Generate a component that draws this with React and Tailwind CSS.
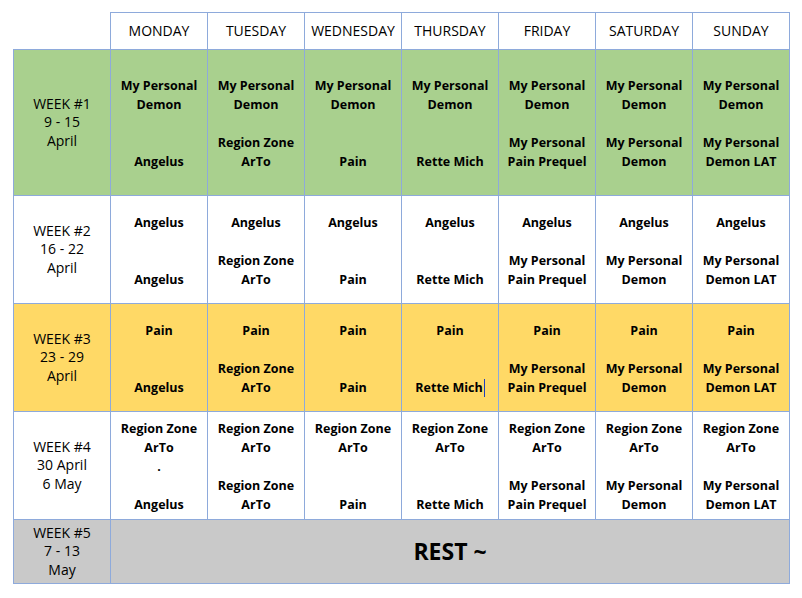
const DAYS = ["MONDAY", "TUESDAY", "WEDNESDAY", "THURSDAY", "FRIDAY", "SATURDAY", "SUNDAY"];

const WEEKS = [
  {
    label: ["WEEK #1", "9 - 15", "April"],
    bg: "bg-[#a9d08e]",
    h: "h-[146px]",
    cells: [
      ["My Personal", "Demon", "", "", "Angelus"],
      ["My Personal", "Demon", "", "Region Zone", "ArTo"],
      ["My Personal", "Demon", "", "", "Pain"],
      ["My Personal", "Demon", "", "", "Rette Mich"],
      ["My Personal", "Demon", "", "My Personal", "Pain Prequel"],
      ["My Personal", "Demon", "", "My Personal", "Demon"],
      ["My Personal", "Demon", "", "My Personal", "Demon LAT"],
    ],
  },
  {
    label: ["WEEK #2", "16 - 22", "April"],
    bg: "bg-white",
    h: "h-[108px]",
    cells: [
      ["Angelus", "", "", "Angelus"],
      ["Angelus", "", "Region Zone", "ArTo"],
      ["Angelus", "", "", "Pain"],
      ["Angelus", "", "", "Rette Mich"],
      ["Angelus", "", "My Personal", "Pain Prequel"],
      ["Angelus", "", "My Personal", "Demon"],
      ["Angelus", "", "My Personal", "Demon LAT"],
    ],
  },
  {
    label: ["WEEK #3", "23 - 29", "April"],
    bg: "bg-[#ffd966]",
    h: "h-[108px]",
    cursor: 3,
    cells: [
      ["Pain", "", "", "Angelus"],
      ["Pain", "", "Region Zone", "ArTo"],
      ["Pain", "", "", "Pain"],
      ["Pain", "", "", "Rette Mich"],
      ["Pain", "", "My Personal", "Pain Prequel"],
      ["Pain", "", "My Personal", "Demon"],
      ["Pain", "", "My Personal", "Demon LAT"],
    ],
  },
  {
    label: ["WEEK #4", "30 April", "6 May"],
    bg: "bg-white",
    h: "h-[108px]",
    cells: [
      ["Region Zone", "ArTo", ".", "", "Angelus"],
      ["Region Zone", "ArTo", "", "Region Zone", "ArTo"],
      ["Region Zone", "ArTo", "", "", "Pain"],
      ["Region Zone", "ArTo", "", "", "Rette Mich"],
      ["Region Zone", "ArTo", "", "My Personal", "Pain Prequel"],
      ["Region Zone", "ArTo", "", "My Personal", "Demon"],
      ["Region Zone", "ArTo", "", "My Personal", "Demon LAT"],
    ],
  },
];

const font = "font-['Comic_Sans_MS','Open_Sans',sans-serif]";

function Lines({ lines, cursor }) {
  return (
    <div className="flex flex-col items-center pt-[2px]">
      {lines.map((l, i) => (
        <div key={i} className="h-[19px] leading-[19px] whitespace-nowrap">
          {l || "\u00a0"}
          {cursor && i === lines.length - 1 && (
            <span className="inline-block w-px h-[18px] bg-[#1f3fbf] align-middle ml-px" />
          )}
        </div>
      ))}
    </div>
  );
}

function WeekLabel({ lines }) {
  return (
    <div className="flex flex-col items-center leading-[18.5px]">
      {lines.map((l) => (
        <div key={l}>{l}</div>
      ))}
    </div>
  );
}

export default function App() {
  return (
    <div className={`w-[802px] h-[598px] bg-white pt-[12px] pl-[13px] ${font} text-black`}>
      <table className="table-fixed border-collapse w-[777px]">
        <colgroup>
          <col className="w-[97px]" />
          {DAYS.map((d) => (
            <col key={d} className="w-[97px]" />
          ))}
        </colgroup>
        <tbody>
          <tr className="h-[37px]">
            <td className="p-0" />
            {DAYS.map((d) => (
              <td
                key={d}
                className="border border-[#8eaadb] text-center text-[14px] p-0 pb-[2px] align-middle"
              >
                {d}
              </td>
            ))}
          </tr>
          {WEEKS.map((w, wi) => (
            <tr key={wi} className={`${w.bg} ${w.h}`}>
              <td className="border border-[#8eaadb] text-center text-[14px] p-0 align-middle">
                <WeekLabel lines={w.label} />
              </td>
              {w.cells.map((c, ci) => (
                <td
                  key={ci}
                  className="border border-[#8eaadb] text-center text-[12.5px] font-bold p-0 align-middle"
                >
                  <Lines lines={c} cursor={w.cursor === ci} />
                </td>
              ))}
            </tr>
          ))}
          <tr className="bg-[#c9c9c9] h-[64px]">
            <td className="border border-[#8eaadb] text-center text-[14px] p-0 align-middle">
              <WeekLabel lines={["WEEK #5", "7 - 13", "May"]} />
            </td>
            <td
              colSpan={7}
              className="border border-[#8eaadb] text-center text-[23px] font-bold p-0 align-middle"
            >
              REST ~
            </td>
          </tr>
        </tbody>
      </table>
    </div>
  );
}
